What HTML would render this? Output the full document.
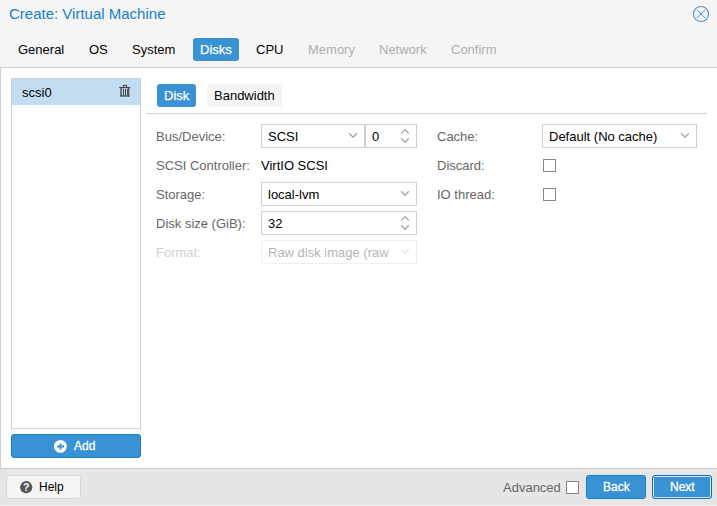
<!DOCTYPE html>
<html><head><meta charset="utf-8">
<style>
*{box-sizing:border-box;margin:0;padding:0}
html,body{width:717px;height:506px;overflow:hidden;background:#fff;font-family:"Liberation Sans",sans-serif;font-size:13px;color:#000}
.a{position:absolute}
.t{position:absolute;white-space:nowrap;font-size:13.5px;line-height:16px;transform:scaleX(0.962963);transform-origin:0 0;margin-top:1px}
.tab{position:absolute;top:38px;height:23px;border-radius:3px}
.act{background:#3892d4}
.lbl{color:#666}
.fld{position:absolute;height:24px;border:1px solid #d0d0d0;background:#fff}
.cb{position:absolute;width:13px;height:13px;border:1px solid #858585;background:#fff}
.btn{position:absolute;background:#3892d4;border:1px solid #157fcc;border-radius:3px}
.bt{position:absolute;white-space:nowrap;font-size:12px;line-height:16px;color:#fff;-webkit-text-stroke:0.3px #fff}
</style></head><body>
<!-- header -->
<div class="a" style="left:0;top:0;width:717px;height:67px;background:#f5f5f5"></div>
<div class="a" style="left:9px;top:5px;font-size:15px;line-height:18px;color:#157fcc;white-space:nowrap">Create: Virtual Machine</div>
<svg class="a" style="left:692px;top:5px" width="18" height="18" viewBox="0 0 18 18"><circle cx="9" cy="9" r="7.5" fill="none" stroke="#4a8fd0" stroke-width="1.1"/><path d="M5 5L13 13M13 5L5 13" stroke="#4a8fd0" stroke-width="0.95"/></svg>

<div class="tab act" style="left:193px;width:46px"></div>
<div class="t" style="left:18px;top:41px">General</div>
<div class="t" style="left:89px;top:41px">OS</div>
<div class="t" style="left:132px;top:41px">System</div>
<div class="t" style="left:200px;top:41px;color:#fff;-webkit-text-stroke:0.25px #fff">Disks</div>
<div class="t" style="left:256px;top:41px">CPU</div>
<div class="t" style="left:308px;top:41px;opacity:.3">Memory</div>
<div class="t" style="left:379px;top:41px;opacity:.3">Network</div>
<div class="t" style="left:451px;top:41px;opacity:.3">Confirm</div>

<div class="a" style="left:0;top:67px;width:717px;height:1px;background:#d0d0d0"></div>
<div class="a" style="left:0;top:67px;width:1px;height:402px;background:#d0d0d0"></div>

<!-- left list -->
<div class="a" style="left:11px;top:78px;width:130px;height:351px;border:1px solid #d0d0d0;background:#fff"></div>
<div class="a" style="left:12px;top:79px;width:128px;height:26px;background:#c2ddf2"></div>
<div class="t" style="left:22px;top:84px">scsi0</div>
<svg class="a" style="left:119px;top:84px" width="14" height="14" viewBox="0 0 14 14"><g fill="#444"><rect x="0.2" y="3" width="11.1" height="1.1"/><rect x="3.9" y="0.9" width="4.1" height="1.1"/><rect x="3.9" y="2" width="1" height="1"/><rect x="7" y="2" width="1" height="1"/><rect x="1.4" y="4" width="1.4" height="8.6"/><rect x="9.1" y="4" width="1.2" height="8.6"/><rect x="1.4" y="11.3" width="8.9" height="1.3"/><rect x="4" y="4.8" width="1" height="6.5"/><rect x="6" y="4.8" width="1" height="6.5"/><rect x="8" y="4.8" width="0.9" height="6.5"/></g></svg>

<div class="btn" style="left:11px;top:434px;width:130px;height:24px"></div>
<svg class="a" style="left:54px;top:439.5px" width="13" height="13" viewBox="0 0 13 13"><circle cx="6.4" cy="6.4" r="6.4" fill="#fff"/><path d="M6.5 3.4V9.5M3.1 6.5H10" stroke="#3892d4" stroke-width="1.8"/></svg>
<div class="bt" style="left:74px;top:438px">Add</div>

<!-- right panel tabs -->
<div class="tab act" style="left:157px;top:84px;width:39px"></div>
<div class="tab" style="left:207px;top:84px;width:75px;background:#f5f5f5"></div>
<div class="t" style="left:164px;top:87px;color:#fff;-webkit-text-stroke:0.25px #fff">Disk</div>
<div class="t" style="left:214px;top:87px">Bandwidth</div>
<div class="a" style="left:146px;top:113px;width:561px;height:1px;background:#d0d0d0"></div>

<!-- form col 1 -->
<div class="t lbl" style="left:156px;top:128px">Bus/Device:</div>
<div class="fld" style="left:261px;top:124px;width:104px"></div>
<div class="t" style="left:268px;top:128px">SCSI</div>
<div class="fld" style="left:365px;top:124px;width:52px"></div>
<div class="t" style="left:372px;top:128px">0</div>
<div class="t lbl" style="left:156px;top:157px">SCSI Controller:</div>
<div class="t" style="left:261px;top:157px">VirtIO SCSI</div>
<div class="t lbl" style="left:156px;top:186px">Storage:</div>
<div class="fld" style="left:261px;top:182px;width:156px"></div>
<div class="t" style="left:268px;top:186px">local-lvm</div>
<div class="t lbl" style="left:156px;top:215px">Disk size (GiB):</div>
<div class="fld" style="left:261px;top:211px;width:156px"></div>
<div class="t" style="left:268px;top:215px">32</div>
<div style="opacity:.3">
<div class="t lbl" style="left:156px;top:244px">Format:</div>
<div class="fld" style="left:261px;top:240px;width:156px"></div>
<div class="a" style="left:262px;top:241px;width:127px;height:22px;overflow:hidden"><div class="t" style="left:6px;top:3px">Raw disk image (raw)</div></div>
<svg class="a" style="left:0;top:0" width="717" height="506" viewBox="0 0 717 506"><path d="M401.2 249.2L405 253.2L408.8 249.2" fill="none" stroke="#a6a6a6" stroke-width="1.35"/></svg>
</div>

<!-- form col 2 -->
<div class="t lbl" style="left:437px;top:128px">Cache:</div>
<div class="fld" style="left:542px;top:124px;width:155px"></div>
<div class="t" style="left:549px;top:128px">Default (No cache)</div>
<div class="t lbl" style="left:437px;top:157px">Discard:</div>
<div class="cb" style="left:543px;top:159px"></div>
<div class="t lbl" style="left:437px;top:186px">IO thread:</div>
<div class="cb" style="left:543px;top:188px"></div>

<svg class="a" style="left:0;top:0" width="717" height="506" viewBox="0 0 717 506"><g fill="none" stroke="#a6a6a6" stroke-width="1.35">
<path d="M349.2 133.2L353 137.2L356.8 133.2"/>
<path d="M401.2 133.4L405 129.6L408.8 133.4M401.2 138.3L405 142.3L408.8 138.3"/>
<path d="M401.2 191.2L405 195.2L408.8 191.2"/>
<path d="M401.2 220.4L405 216.6L408.8 220.4M401.2 225.3L405 229.3L408.8 225.3"/>
<path d="M681.2 133.2L685 137.2L688.8 133.2"/>
</g></svg>

<!-- footer -->
<div class="a" style="left:0;top:468px;width:717px;height:38px;background:#e6e6e6;border-top:1px solid #d0d0d0"></div>
<div class="a" style="left:6px;top:475px;width:75px;height:24px;background:#f5f5f5;border:1px solid #d8d8d8;border-radius:3px"></div>
<svg class="a" style="left:20px;top:480.5px" width="13" height="13" viewBox="0 0 13 13"><circle cx="6.2" cy="6.2" r="6.1" fill="#555"/><text x="6.1" y="10.3" font-size="10.5" font-weight="bold" fill="#fff" text-anchor="middle" font-family="Liberation Sans">?</text></svg>
<div class="bt" style="left:39px;top:479px;color:#000;-webkit-text-stroke:0">Help</div>
<div class="t lbl" style="left:503px;top:479px">Advanced</div>
<div class="cb" style="left:566px;top:481px"></div>
<div class="a" style="left:0;top:505px;width:717px;height:1px;background:#f3f3f3"></div>
<div class="btn" style="left:586px;top:475px;width:60px;height:24px"></div>
<div class="bt" style="left:603px;top:479px">Back</div>
<div class="btn" style="left:652px;top:475px;width:60px;height:24px;border-color:#126fbf;box-shadow:inset 0 0 0 1px #d6e8f6"></div>
<div class="bt" style="left:670px;top:479px">Next</div>
</body></html>
